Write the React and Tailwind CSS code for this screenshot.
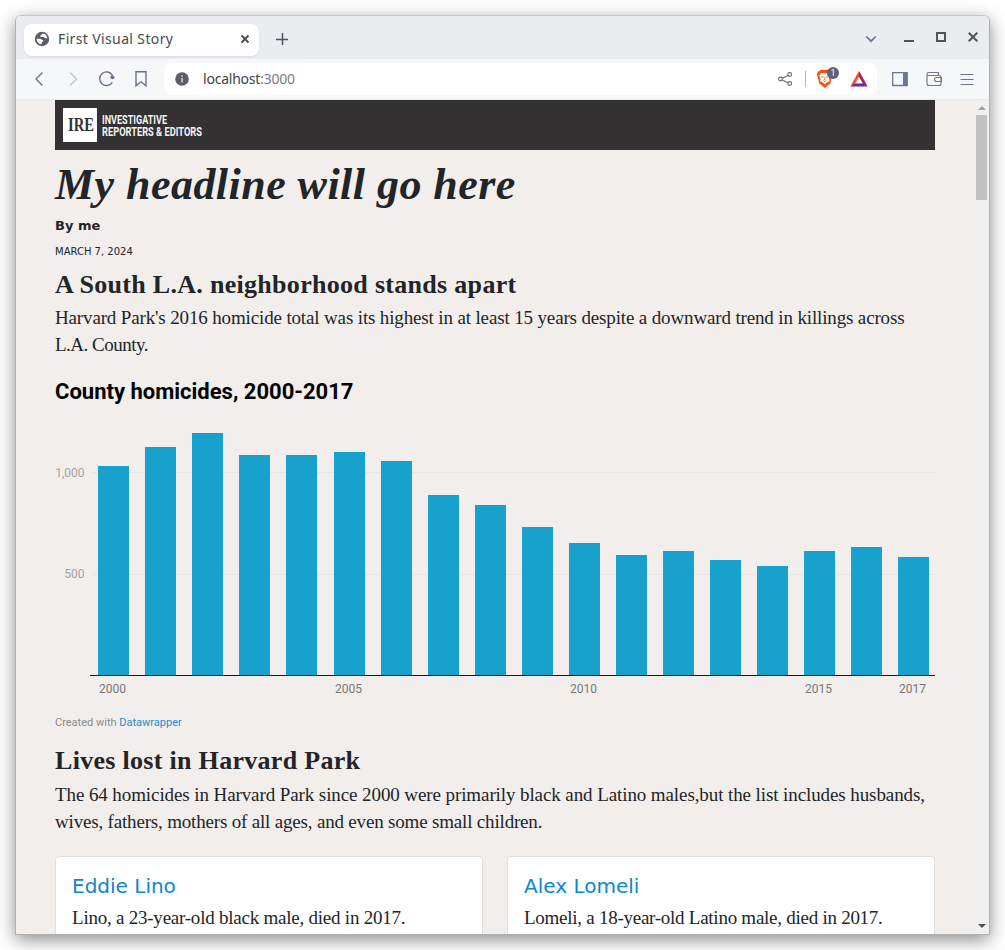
import React from "react";

const bars = [
  [98, 466], [145, 447], [192, 433], [239, 455], [286, 455], [334, 452],
  [381, 461], [428, 495], [475, 505], [522, 527], [569, 543], [616, 555],
  [663, 551], [710, 560], [757, 566], [804, 551], [851, 547], [898, 557],
];
const years = [[112.5, "2000"], [348.5, "2005"], [583.5, "2010"], [818.5, "2015"], [912.5, "2017"]];

function TabStrip() {
  return (
    <div className="flex h-[43px] shrink-0 items-center bg-[#ebecf0] pl-2 pr-[11px]">
      <div className="mt-1 flex h-8 w-[235px] items-center rounded-[8px] bg-white pl-[10px] pr-[9px] shadow-[0_1px_2px_rgba(0,0,0,0.08)]">
        <svg className="-mt-[2px]" width="16" height="16" viewBox="0 0 16 16">
          <circle cx="8" cy="8" r="7.2" fill="#5b5e66" />
          <path d="M9.200 2.600c-1.600.3-1.200 1.300-2.400 1.600-1.100.3-.7 1.700.4 1.800h2.400c1 .1.800 1.200 1.800 1.200h1.900c-.1-2.200-1.700-4.100-4.100-4.600ZM2.600 7.700h3.100c1.500 0 1.700 1 2.800 1.200 1.300.2 1.100 1.500.1 1.700-.9.3-.4 1.500-1.300 2.700C4.600 12.900 2.700 10.600 2.600 7.700Z" fill="#fff" />
        </svg>
        <span className="-mt-[2px] ml-[8px] whitespace-nowrap font-['Noto_Sans',sans-serif] text-[14px] leading-5 tracking-[0.37px] text-[#47494e]">First Visual Story</span>
        <svg className="-mt-[2px] ml-auto" width="10" height="10" viewBox="0 0 10 10"><path d="M1.500 1.500l7 7M8.500 1.500l-7 7" stroke="#45484e" strokeWidth="1.800" /></svg>
      </div>
      <svg className="ml-[16px] mt-[3px]" width="14" height="14" viewBox="0 0 14 14"><path d="M7.500 1v12M1 7.500h12" stroke="#505257" strokeWidth="1.500" /></svg>
      <div className="-mt-[2px] ml-auto flex items-center">
        <svg className="mt-[5px]" width="12" height="8" viewBox="0 0 12 8"><path d="M1.300 1.500L6 6.200l4.700-4.700" fill="none" stroke="#68758a" strokeWidth="1.700" /></svg>
        <svg className="ml-[27px]" width="10" height="10" viewBox="0 0 10 10"><path d="M0 9h10" stroke="#515359" strokeWidth="2" /></svg>
        <svg className="ml-[22px]" width="10" height="10" viewBox="0 0 10 10"><path d="M1 1h8v8H1z" fill="none" stroke="#515359" strokeWidth="2" /></svg>
        <svg className="ml-[22px]" width="10" height="10" viewBox="0 0 10 10"><path d="M.7.7l8.600 8.600M9.300.7L.7 9.300" stroke="#515359" strokeWidth="2" /></svg>
      </div>
    </div>
  );
}

function Toolbar() {
  return (
    <div className="flex h-[41px] shrink-0 items-center border-b border-[#e9ebef] bg-[#f5f7f9]">
      <svg width="148" height="40" viewBox="16 59 148 40" fill="none" stroke="#66748b" strokeWidth="1.400">
        <path d="M42.500 72.500L36 79l6.500 6.500" />
        <path d="M70 72.500l6.500 6.500-6.500 6.500" stroke="#c3c6cf" />
        <path d="M112.300 82.300A6.800 6.800 0 1 1 112.400 75.300" />
        <circle cx="112.400" cy="77.300" r="2" fill="#66748b" stroke="none" />
        <path d="M136 71.700h10v14.100l-5-4-5 4z" />
      </svg>
      <div className="flex h-8 w-[713px] items-center rounded-[8px] bg-white pl-[11px]">
        <svg width="14" height="14" viewBox="0 0 14 14"><circle cx="7" cy="7" r="6.800" fill="#5b5e66" /><path d="M6.200 6h1.700v4.500H6.200zM6.200 3.300h1.700v1.500H6.200z" fill="#c9cacc" /></svg>
        <span className="ml-[14px] whitespace-nowrap font-['Noto_Sans',sans-serif] text-[14px] leading-5 tracking-[-0.22px] text-[#404247]">localhost<span className="text-[#7b7d81]">:3000</span></span>
        <svg className="ml-auto" width="105" height="32" viewBox="772 63 105 32" fill="none">
          <g stroke="#66686c" strokeWidth="1.100">
            <circle cx="780.500" cy="79" r="1.900" /><circle cx="789.700" cy="74.500" r="1.900" /><circle cx="789.700" cy="83.500" r="1.900" />
            <path d="M782.300 78.200l5.700-2.800M782.300 79.900l5.700 2.800" />
          </g>
          <path d="M805.500 71v16" stroke="#b4b6ba" />
          <path d="M818 71.700l3-2h7.500l3 2 1.200 2.500-.7 2-1.700 7.300-5.500 4.500-5.500-4.500-1.800-7.300-.7-2z" fill="#fb5410" />
          <path d="M821 73h2.500l1.300.5 1.300-.5h2.700l1.500 3-1.200 3 .5 2-2.300 1.300-2.500 2-2.500-2-2.300-1.300.5-2-1.200-3z" fill="#fff" />
          <path d="M821.300 76.500l2.200.7M828.300 76.500l-2.200.7M824.800 77.500v2.700M823.300 80.700l1.500.8 1.500-.8" stroke="#fb5410" strokeWidth=".9" />
          <circle cx="833" cy="72.900" r="6" fill="#5d6370" />
          <text x="833" y="76" textAnchor="middle" fill="#fff" fontSize="9" fontFamily="Roboto, sans-serif">1</text>
          <path d="M859 71l-8.700 15.500 4.600-2.500 4.100-7.500z" fill="#ff4a20" />
          <path d="M859 71l8.700 15.500-4.600-2.500-4.100-7.500z" fill="#9e1f63" />
          <path d="M850.300 86.500l4.600-3h8.200l4.600 3z" fill="#662d91" />
        </svg>
      </div>
      <svg width="112" height="40" viewBox="877 59 112 40" fill="none" stroke="#6b778c" strokeWidth="1.300">
        <path d="M892.700 72.700h14.500v12.800h-14.500z" />
        <path d="M903 72.500h4.200v13H903z" fill="#6b778c" stroke="none" />
        <path d="M927 75v8.500a2 2 0 0 0 2 2h10a2 2 0 0 0 2-2v-6a2 2 0 0 0-2-2H928.500a1.500 1.500 0 0 1 0-3H938.500v3M941.500 77.500H936.500a2 2 0 0 0 0 4h5z" strokeWidth="1.100" />
        <path d="M960.500 74.500h13M960.500 79.500h13M960.500 84.500h13" strokeWidth="1.200" />
      </svg>
    </div>
  );
}

function Chart() {
  return (
    <svg className="block font-['Roboto',sans-serif]" width="880" height="280" viewBox="55 420 880 280" shapeRendering="crispEdges">
      <path d="M91 472.500H935M91 574.500H935" stroke="#e6e6e6" />
      {bars.map(([x, y]) => <rect key={x} x={x} y={y} width="31" height={675 - y} fill="#18a1cd" />)}
      <path d="M90 675.500H935" stroke="#18181b" />
      <g fontSize="12" fill="#a3a3a3" textAnchor="end"><text x="84.500" y="477">1,000</text><text x="84.500" y="578">500</text></g>
      <g fontSize="12" fill="#777" textAnchor="middle">{years.map(([x, t]) => <text key={t} x={x} y="693">{t}</text>)}</g>
    </svg>
  );
}

function Card({ name, children }) {
  return (
    <div className="h-[120px] flex-1 rounded-[4px] border border-[#dedede] bg-white px-4 pt-4">
      <h3 className="font-['DejaVu_Sans',sans-serif] text-[20px] leading-[26px] text-[#0d86cc]">{name}</h3>
      {children}
    </div>
  );
}

export default function App() {
  return (
    <div className="h-[950px] w-[1005px] overflow-hidden bg-white p-[15px]">
      <div className="flex h-[920px] w-[975px] flex-col overflow-hidden rounded-t-[6px] border border-[#b0b0b0] border-t-[#c4c6c5] shadow-[0_5px_18px_rgba(0,0,0,0.45)]">
        <TabStrip />
        <Toolbar />
        <div className="flex min-h-0 flex-1 bg-[#f2eeeb]">
          <main className="ml-[39px] w-[880px] text-[#212529]">
            <header className="flex h-[50px] items-center bg-[#333132] pl-2">
              <svg width="200" height="34" viewBox="0 0 200 34">
                <rect width="34" height="34" fill="#fff" />
                <g transform="translate(5 22.500) scale(.77 1)" fontFamily="Liberation Serif, serif" fontWeight="700" fontSize="19" fill="#333132"><text>IRE</text></g>
                <g fill="#f4f4f4" fontFamily="Roboto, sans-serif" fontWeight="700" fontSize="12.500">
                  <text x="39" y="15.700" textLength="65" lengthAdjust="spacingAndGlyphs">INVESTIGATIVE</text>
                  <text x="39" y="27.700" textLength="100" lengthAdjust="spacingAndGlyphs">REPORTERS &amp; EDITORS</text>
                </g>
              </svg>
            </header>
            <h1 className="mt-[10px] whitespace-nowrap font-['Liberation_Serif',serif] text-[44px] font-bold italic leading-[50px] tracking-[0.46px]">My headline will go here</h1>
            <p className="mt-[6px] font-['DejaVu_Sans',sans-serif] text-[13px] font-bold leading-5">By me</p>
            <p className="mt-[7px] font-['DejaVu_Sans',sans-serif] text-[10px] leading-[18px]">MARCH 7, 2024</p>
            <h2 className="mt-[8px] whitespace-nowrap font-['Liberation_Serif',serif] text-[26px] font-bold leading-8 tracking-[0.3px]">A South L.A. neighborhood stands apart</h2>
            <p className="mt-[3px] whitespace-nowrap font-['Liberation_Serif',serif] text-[19px] leading-[27px]">
              <span className="block tracking-[-0.145px]">Harvard Park's 2016 homicide total was its highest in at least 15 years despite a downward trend in killings across</span>
              <span className="block tracking-[-0.5px]">L.A. County.</span>
            </p>
            <h3 className="mt-[21px] h-[41px] whitespace-nowrap font-['Roboto',sans-serif] text-[22px] font-bold leading-[26px] text-black">County homicides, 2000-2017</h3>
            <Chart />
            <p className="mt-[15px] font-['Roboto',sans-serif] text-[11px] leading-4 text-[#8b8b8b]">Created with <a className="text-[#1d8fd0]">Datawrapper</a></p>
            <h2 className="mt-[14px] whitespace-nowrap font-['Liberation_Serif',serif] text-[26px] font-bold leading-8 tracking-[0.3px]">Lives lost in Harvard Park</h2>
            <p className="mt-[4px] whitespace-nowrap font-['Liberation_Serif',serif] text-[19px] leading-[27px]">
              <span className="block tracking-[-0.095px]">The 64 homicides in Harvard Park since 2000 were primarily black and Latino males,but the list includes husbands,</span>
              <span className="block tracking-[-0.18px]">wives, fathers, mothers of all ages, and even some small children.</span>
            </p>
            <div className="mt-[21px] flex gap-6">
              <Card name="Eddie Lino"><p className="mt-[5px] whitespace-nowrap font-['Liberation_Serif',serif] text-[19px] leading-[27px] tracking-[-0.23px]">Lino, a 23-year-old black male, died in 2017.</p></Card>
              <Card name="Alex Lomeli"><p className="mt-[5px] whitespace-nowrap font-['Liberation_Serif',serif] text-[19px] leading-[27px] tracking-[-0.26px]">Lomeli, a 18-year-old Latino male, died in 2017.</p></Card>
            </div>
          </main>
          <div className="ml-auto flex w-[15px] flex-col items-center bg-[#f0f0f0] pb-[6px] pt-[6px]">
            <svg width="8" height="4" viewBox="0 0 8 4"><path d="M4 0l4 4H0z" fill="#a3a3a3" /></svg>
            <div className="mr-px mt-[5px] h-[85px] w-[11px] bg-[#c1c1c1]" />
            <svg className="mt-auto" width="8" height="4" viewBox="0 0 8 4"><path d="M4 4L0 0h8z" fill="#505050" /></svg>
          </div>
        </div>
      </div>
    </div>
  );
}
